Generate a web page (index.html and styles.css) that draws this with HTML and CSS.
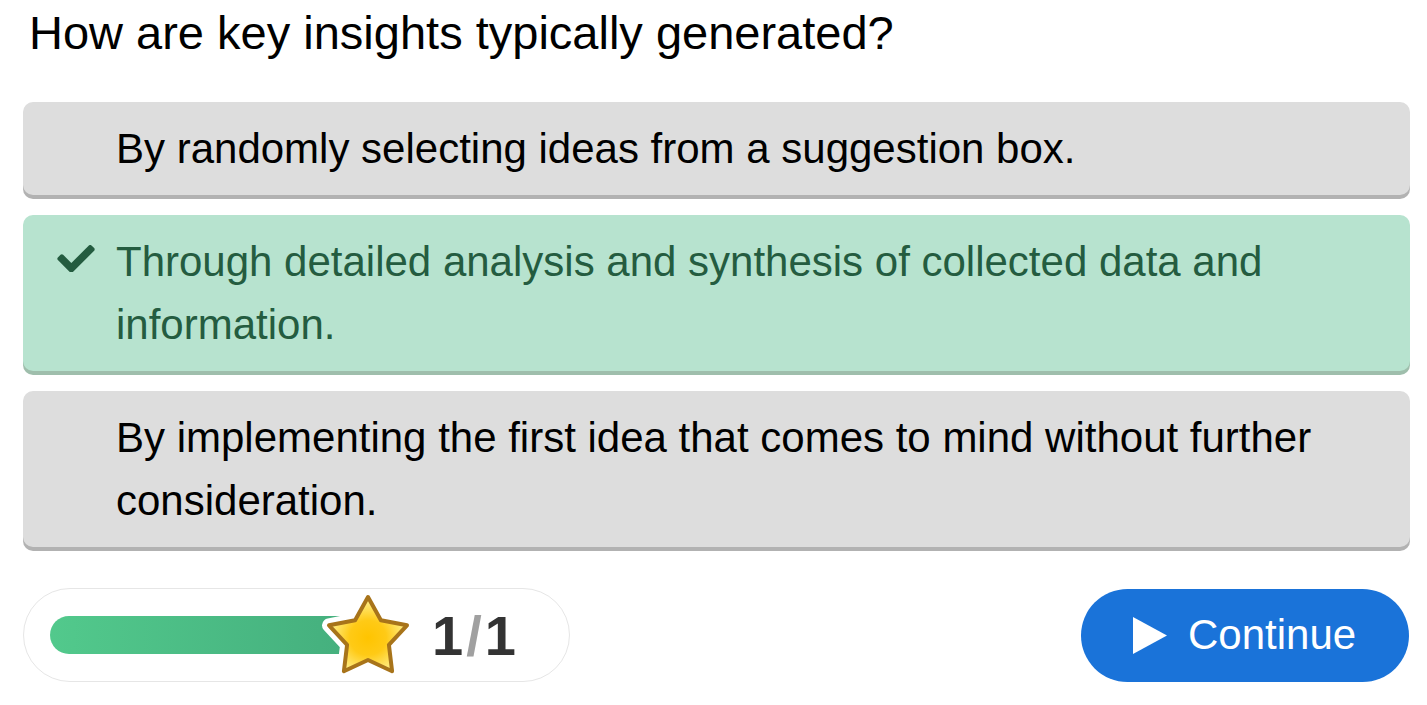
FILE: index.html
```html
<!DOCTYPE html>
<html lang="en">
<head>
<meta charset="utf-8">
<title>Quiz</title>
<link rel="stylesheet" href="styles.css">
</head>
<body>
<main class="quiz">
  <h1 class="question">How are key insights typically generated?</h1>
  <div class="options">
    <div class="option">
      <span class="icon"></span>
      <span class="text">By randomly selecting ideas from a suggestion box.</span>
    </div>
    <div class="option correct">
      <span class="icon">
        <svg viewBox="0 0 512 370" width="38" height="27"><path fill="currentColor" d="M173.9 367.4L7.5 201c-10-10-10-26.2 0-36.2l36.2-36.2c10-10 26.2-10 36.2 0L192 240.7 432.1 0.6c10-10 26.2-10 36.2 0l36.2 36.2c10 10 10 26.2 0 36.2L210.1 367.4c-10 10-26.2 10-36.2 0z" transform="translate(0,6)"/></svg>
      </span>
      <span class="text">Through detailed analysis and synthesis of collected data and information.</span>
    </div>
    <div class="option">
      <span class="icon"></span>
      <span class="text">By implementing the first idea that comes to mind without further consideration.</span>
    </div>
  </div>
  <div class="footer">
    <div class="progress">
      <div class="bar"></div>
      <svg class="star" viewBox="0 0 92 88" width="92" height="88">
        <defs>
          <radialGradient id="sg" cx="50%" cy="55%" r="52%">
            <stop offset="0" stop-color="#ffc400"/>
            <stop offset="0.45" stop-color="#ffca16"/>
            <stop offset="1" stop-color="#fff190"/>
          </radialGradient>
        </defs>
        <polygon points="46,5 58.9,28.2 85,33.3 66.9,52.8 70.1,79.2 46,68 21.9,79.2 25.1,52.8 7,33.3 33.1,28.2" fill="#fff" stroke="#fff" stroke-width="14" stroke-linejoin="round"/>
        <polygon points="46,5 58.9,28.2 85,33.3 66.9,52.8 70.1,79.2 46,68 21.9,79.2 25.1,52.8 7,33.3 33.1,28.2" fill="url(#sg)" stroke="#a8741a" stroke-width="4" stroke-linejoin="round"/>
      </svg>
      <div class="count"><span>1</span><span class="slash">/</span><span>1</span></div>
    </div>
    <button class="continue">
      <svg viewBox="0 0 34 37" width="34" height="37"><polygon points="0,0 34,18.5 0,37" fill="#fff"/></svg>
      <span>Continue</span>
    </button>
  </div>
</main>
</body>
</html>
```
FILE: styles.css
```css
* { box-sizing: border-box; }
html, body { margin: 0; padding: 0; background: #fff; }
body {
  font-family: "Liberation Sans", Arial, sans-serif;
  color: #000;
}
.quiz {
  padding: 0 17px 0 23px;
}
.question {
  font-size: 47px;
  font-weight: normal;
  line-height: 54px;
  margin: 0;
  padding: 6px 0 0 6px;
  height: 102px;
}
.options {
  display: flex;
  flex-direction: column;
  gap: 20px;
}
.option {
  display: flex;
  align-items: flex-start;
  background: #dddddd;
  border-radius: 10px;
  box-shadow: 0 4px 0 #b2b2b2;
  padding: 15px 20px 15px 34px;
  font-size: 42px;
  line-height: 63px;
}
.option .icon {
  flex: 0 0 38px;
  width: 38px;
  height: 63px;
  margin-right: 21px;
  display: flex;
  align-items: center;
  justify-content: center;
}
.option .icon svg { display: block; margin-top: -6px; }
.option.correct {
  background: #b7e3cf;
  box-shadow: 0 4px 0 #9fbeac;
  color: #245c40;
}
.footer {
  display: flex;
  justify-content: space-between;
  align-items: center;
  margin-top: 41px;
}
.progress {
  display: flex;
  align-items: center;
  width: 547px;
  height: 94px;
  border: 1px solid #e6e6e6;
  border-radius: 47px;
  padding-left: 26px;
}
.bar {
  width: 292px;
  height: 38px;
  border-radius: 19px 0 0 19px;
  background: linear-gradient(90deg, #52c98c, #45b07e);
}
.star {
  display: block;
  margin-left: -20px;
  margin-top: 2px;
  flex: 0 0 auto;
}
.count {
  font-size: 56px;
  font-weight: bold;
  color: #333;
  margin-left: 18px;
}
.count .slash {
  color: #a0a0a0;
  margin: 0 3px;
}
.continue {
  display: flex;
  align-items: center;
  gap: 21px;
  width: 328px;
  height: 93px;
  margin-right: 1px;
  border: none;
  border-radius: 47px;
  background: #1a73d9;
  color: #fff;
  font-family: "Liberation Sans", Arial, sans-serif;
  font-size: 42px;
  padding: 0 0 0 52px;
  cursor: pointer;
}
.continue svg { display: block; }
```
